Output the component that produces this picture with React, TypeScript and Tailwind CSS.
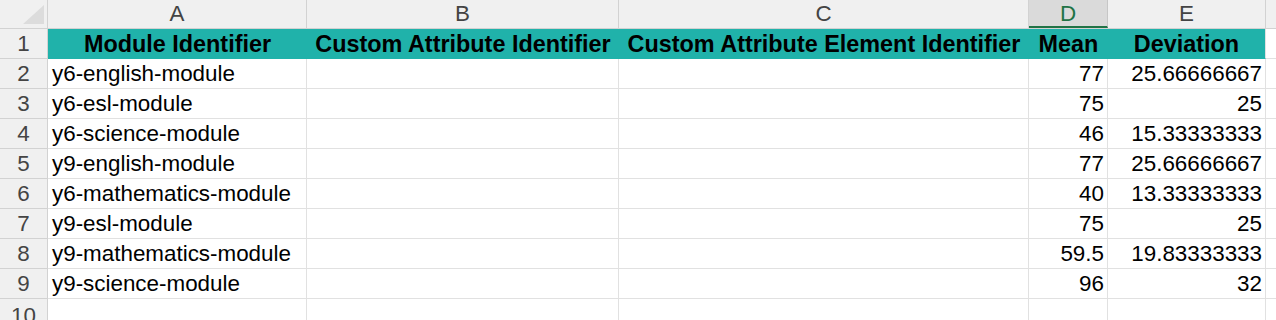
import React from "react";

const cols = ["A", "B", "C", "D", "E"];
const widths = ["w-[259px]", "w-[312px]", "w-[410px]", "w-[79px]", "w-[158px]"];

const rows: [string, string, string, string, string][] = [
  ["y6-english-module", "", "", "77", "25.66666667"],
  ["y6-esl-module", "", "", "75", "25"],
  ["y6-science-module", "", "", "46", "15.33333333"],
  ["y9-english-module", "", "", "77", "25.66666667"],
  ["y6-mathematics-module", "", "", "40", "13.33333333"],
  ["y9-esl-module", "", "", "75", "25"],
  ["y9-mathematics-module", "", "", "59.5", "19.83333333"],
  ["y9-science-module", "", "", "96", "32"],
];

const headers = [
  "Module Identifier",
  "Custom Attribute Identifier",
  "Custom Attribute Element Identifier",
  "Mean",
  "Deviation",
];

export default function App() {
  return (
    <div
      className="w-[1276px] h-[320px] overflow-hidden bg-white text-[22.4px] text-black"
      style={{ fontFamily: '"Liberation Sans", Arial, sans-serif' }}
    >
      {/* column header row */}
      <div className="flex h-[29px] bg-[#f0f0f0] border-b border-[#d2d2d2]">
        <div className="relative w-[48px] shrink-0 border-r border-[#d2d2d2]">
          <svg className="absolute left-0 top-0" width="48" height="28">
            <polygon points="44,5 44,24 23,24" fill="#dcdcdc" />
          </svg>
        </div>
        {cols.map((c, i) =>
          c === "D" ? (
            <div
              key={c}
              className={`${widths[i]} shrink-0 flex items-center justify-center bg-[#dadada] border-r border-[#c6c6c6] border-b-2 border-b-[#217346] text-[#217346] leading-none pt-[2px]`}
            >
              {c}
            </div>
          ) : (
            <div
              key={c}
              className={`${widths[i]} shrink-0 flex items-center justify-center border-r border-[#d2d2d2] text-[#444444] leading-none pt-[1px]`}
            >
              {c}
            </div>
          )
        )}
        <div className="flex-1" />
      </div>

      {/* row 1 */}
      <div className="flex h-[30px]">
        <div className="w-[48px] shrink-0 bg-[#f0f0f0] border-r border-b border-[#d2d2d2] flex items-center justify-center text-[#444444] leading-none pt-[2px]">
          1
        </div>
        <div className="flex w-[1218px] shrink-0 bg-[#20b2aa] border-r border-[#e1e1e1] border-b border-b-[#20b2aa]">
          {headers.map((h, i) => (
            <div
              key={i}
              className={`${i === 4 ? "w-[157px]" : widths[i]} shrink-0 flex items-center justify-center font-bold whitespace-nowrap text-[23.4px] leading-none pt-[2px]`}
            >
              {h}
            </div>
          ))}
        </div>
        <div className="flex-1 border-b border-[#e1e1e1]" />
      </div>

      {/* data rows */}
      {rows.map((r, ri) => (
        <div key={ri} className="flex h-[30px]">
          <div className="w-[48px] shrink-0 bg-[#f0f0f0] border-r border-b border-[#d2d2d2] flex items-center justify-center text-[#444444] leading-none pt-[2px]">
            {ri + 2}
          </div>
          {r.map((v, ci) => (
            <div
              key={ci}
              className={`${widths[ci]} shrink-0 border-r border-b border-[#e1e1e1] flex items-center whitespace-nowrap leading-none pt-[2px] ${
                ci >= 3 ? "justify-end pr-[3px]" : "justify-start pl-[4px]"
              }`}
            >
              {v}
            </div>
          ))}
          <div className="flex-1 border-b border-[#e1e1e1]" />
        </div>
      ))}

      {/* row 10 */}
      <div className="flex h-[30px]">
        <div className="w-[48px] shrink-0 bg-[#f0f0f0] border-r border-[#d2d2d2] flex items-start justify-center text-[#444444] leading-none pt-[6px]">
          10
        </div>
        {cols.map((c, ci) => (
          <div key={c} className={`${widths[ci]} shrink-0 border-r border-[#e1e1e1]`} />
        ))}
        <div className="flex-1" />
      </div>
    </div>
  );
}
